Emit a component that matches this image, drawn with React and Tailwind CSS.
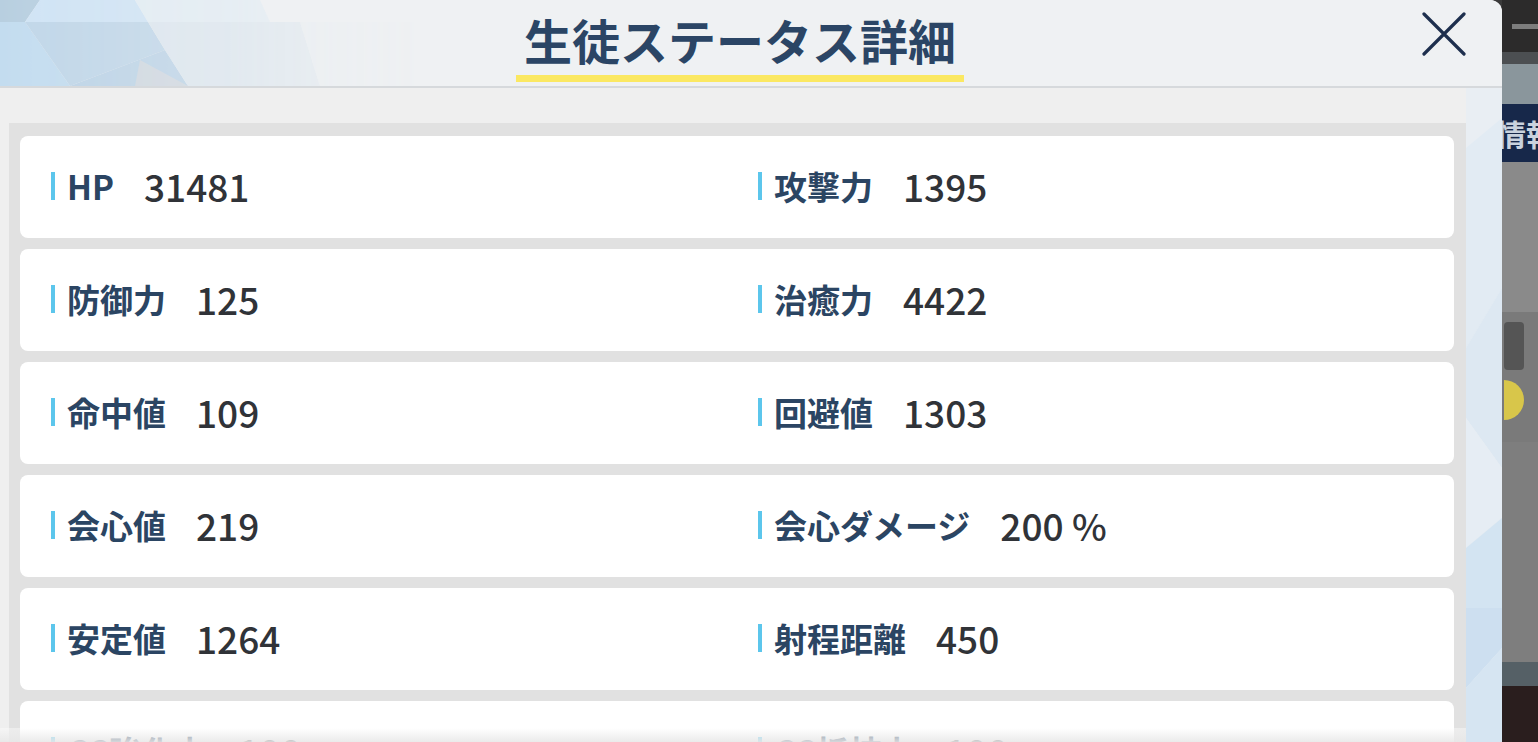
import React from "react";

const rows = [
  [
    ["HP", "31481"],
    ["攻撃力", "1395"],
  ],
  [
    ["防御力", "125"],
    ["治癒力", "4422"],
  ],
  [
    ["命中値", "109"],
    ["回避値", "1303"],
  ],
  [
    ["会心値", "219"],
    ["会心ダメージ", "200 %"],
  ],
  [
    ["安定値", "1264"],
    ["射程距離", "450"],
  ],
  [
    ["CC強化力", "100"],
    ["CC抵抗力", "100"],
  ],
];

function HeaderPattern() {
  return (
    <svg width="420" height="86" viewBox="0 0 420 86" className="shrink-0">
      <defs>
        <linearGradient id="fade" x1="0" x2="1" y1="0" y2="0">
          <stop offset="0" stopColor="#fff" stopOpacity="1" />
          <stop offset="0.55" stopColor="#fff" stopOpacity="0.7" />
          <stop offset="1" stopColor="#fff" stopOpacity="0" />
        </linearGradient>
        <mask id="m">
          <rect width="420" height="86" fill="url(#fade)" />
        </mask>
      </defs>
      <g mask="url(#m)">
        <polygon points="0,0 40,0 25,22 0,22" fill="#b8cfe0" />
        <polygon points="40,0 135,0 148,22 25,22" fill="#cfe3f4" />
        <polygon points="135,0 260,0 270,22 148,22" fill="#e2ecf3" />
        <polygon points="0,22 25,22 70,86 0,86" fill="#c3dcef" />
        <polygon points="25,22 148,22 165,50 70,86" fill="#c0d6e8" />
        <polygon points="70,86 165,50 188,86" fill="#bcd3e6" />
        <polygon points="148,22 300,22 320,86 188,86 165,50" fill="#dce6ee" />
        <polygon points="140,60 188,86 135,86" fill="#cfd7df" />
        <polygon points="300,22 420,22 420,86 320,86" fill="#e9eef2" />
      </g>
    </svg>
  );
}

function SidePattern() {
  return (
    <svg width="36" height="660" viewBox="0 0 36 660" className="block">
      <rect width="36" height="660" fill="#e9eef3" />
      <polygon points="0,60 36,30 36,200 0,260" fill="#e2ebf3" />
      <polygon points="0,260 36,200 36,380 0,330" fill="#dde8f2" />
      <polygon points="0,330 36,380 36,430 0,460" fill="#e6edf4" />
      <polygon points="0,460 36,430 36,520 0,520" fill="#d3e4f2" />
      <polygon points="0,520 36,520 36,560 0,600" fill="#cddff0" />
      <polygon points="0,600 36,560 36,660 0,660" fill="#d6e5f2" />
    </svg>
  );
}

function Stat({ label, value }) {
  return (
    <div className="flex items-center">
      <span className="h-[28px] w-[4px] bg-[#5cc6ec]" />
      <span className="ml-[12px] text-[33px] font-bold leading-none text-[#2b4563]">
        {label}
      </span>
      <span className="ml-[30px] text-[37px] font-medium leading-none text-[#303338]">
        {value}
      </span>
    </div>
  );
}

export default function App() {
  return (
    <div
      className="flex h-[742px] w-[1538px] overflow-hidden bg-[#3a3a3a]"
      style={{ fontFamily: '"Noto Sans CJK JP", "Noto Sans", sans-serif' }}
    >
      {/* modal */}
      <div className="relative flex w-[1502px] shrink-0 flex-col overflow-hidden rounded-tr-[12px] bg-[#efefef]">
        <header className="relative flex h-[88px] shrink-0 items-start border-b-2 border-[#d6d9dc] bg-[#eff1f3]">
          <HeaderPattern />
          <div className="flex flex-1 justify-center pr-[442px]">
            <div className="flex flex-col items-center">
              <h1 className="mt-[8px] px-[4px] text-[48px] font-bold leading-[62px] text-[#2b4565]">
                生徒ステータス詳細
              </h1>
              <div className="mt-[5px] h-[7px] w-[448px] bg-[#fbe862]" />
            </div>
          </div>
          <button className="absolute right-[36px] top-[12px] flex h-[44px] w-[44px] items-center justify-center">
            <svg width="44" height="44" viewBox="0 0 44 44">
              <path
                d="M2 2 L42 42 M42 2 L2 42"
                stroke="#1e2f4e"
                strokeWidth="3.2"
                strokeLinecap="round"
              />
            </svg>
          </button>
        </header>

        <div className="flex flex-1 overflow-hidden pt-[35px]">
          <div className="ml-[9px] flex w-[1457px] shrink-0 flex-col gap-[11px] bg-[#e1e1e1] pl-[11px] pr-[12px] pt-[13px]">
            {rows.map((r, i) => (
              <div
                key={i}
                className="grid h-[102px] shrink-0 grid-cols-[707px_1fr] items-center rounded-[8px] bg-white pb-[2px] pl-[31px]"
              >
                <Stat label={r[0][0]} value={r[0][1]} />
                <Stat label={r[1][0]} value={r[1][1]} />
              </div>
            ))}
          </div>
          <div className="-mt-[35px] flex-1">
            <SidePattern />
          </div>
        </div>

        {/* fade at the bottom edge */}
        <div className="pointer-events-none absolute bottom-0 left-0 h-[14px] w-[1466px] bg-gradient-to-b from-white/40 to-[#e8e8e8]/90" />
      </div>

      {/* game background peeking on the right */}
      <div className="flex flex-1 flex-col">
        <div className="flex h-[52px] flex-col justify-center bg-[#2c2b2b] pl-[10px]">
          <div className="h-[5px] bg-[#7d7d7d]" />
        </div>
        <div className="h-[12px] bg-[#4c4f52]" />
        <div className="h-[40px] bg-[#8a969c]" />
        <div className="flex h-[58px] items-center overflow-hidden bg-[#17284a] text-[30px] font-bold leading-none text-[#c9d2de]">
          <span className="-ml-[6px] whitespace-nowrap">情報</span>
        </div>
        <div className="h-[150px] bg-[#8a8a8a]" />
        <div className="flex h-[130px] flex-col gap-[10px] bg-[#7a7a7a] px-[2px] py-[10px]">
          <div className="h-[48px] w-[20px] rounded-[4px] bg-[#555]" />
          <div className="h-[40px] w-[20px] rounded-r-full bg-[#d8c64a]" />
        </div>
        <div className="h-[220px] bg-[#7e7e7e]" />
        <div className="h-[24px] bg-[#556066]" />
        <div className="flex-1 bg-[#2a1e1e]" />
      </div>
    </div>
  );
}
